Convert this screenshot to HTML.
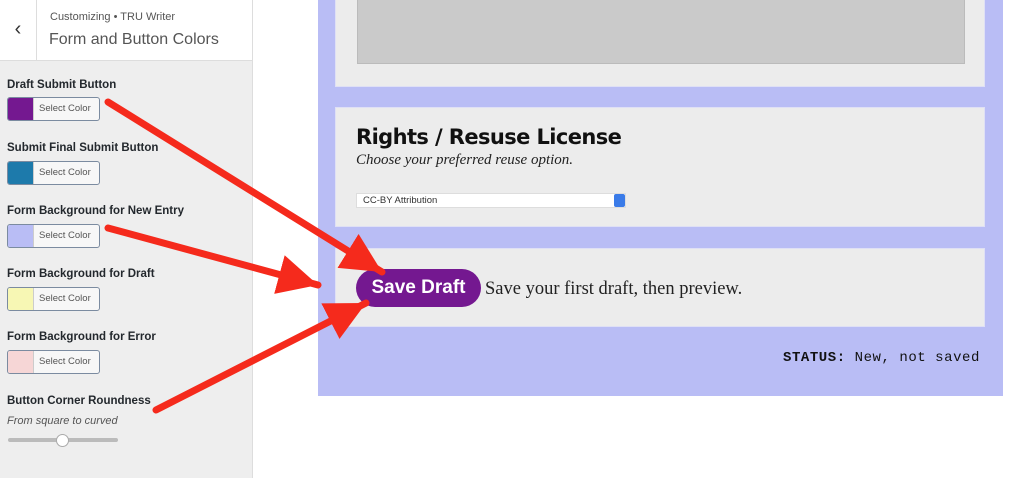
<!DOCTYPE html>
<html><head><meta charset="utf-8"><style>
*{margin:0;padding:0;box-sizing:border-box}
body{width:1028px;height:478px;position:relative;overflow:hidden;background:#fff;font-family:"Liberation Sans",sans-serif}
.side{position:absolute;left:0;top:0;width:253px;height:478px;background:#eeeeee;border-right:1px solid #ddd}
.hdr{position:absolute;left:0;top:0;width:252px;height:61px;background:#fff;border-bottom:1px solid #ddd}
.back{position:absolute;left:0;top:0;width:37px;height:61px;border-right:1px solid #ddd;font-size:20px;color:#333;text-align:center;line-height:58px}
.h1{position:absolute;left:50px;top:11px;font-size:11px;color:#555}
.h2{position:absolute;left:49px;top:31px;font-size:16px;color:#555;font-weight:300}
.lbl{position:absolute;left:7px;font-size:11.5px;font-weight:bold;color:#23282d}
.btn{position:absolute;left:7px;width:93px;height:24px;border:1px solid #7b8ba0;border-radius:3px;background:#f7f7f7;font-size:9.5px;color:#555;line-height:22px;overflow:hidden}
.btn i{display:inline-block;width:26px;height:22px;vertical-align:top;border-right:1px solid #ccc}
.btn span{margin-left:5px}
.blue{position:absolute;left:318px;top:0;width:685px;height:396px;background:#b9bdf5}
.box{position:absolute;left:335px;width:650px;background:#ececec;border:1px solid #dfe0f5}
</style></head><body>
<div class="side">
 <div class="hdr"><div class="back">&#8249;</div><div class="h1">Customizing • TRU Writer</div><div class="h2">Form and Button Colors</div></div>
 <div class="lbl" style="top:79px">Draft Submit Button</div>
 <div class="btn" style="top:97px"><i style="background:#741890"></i><span>Select Color</span></div>
 <div class="lbl" style="top:142px">Submit Final Submit Button</div>
 <div class="btn" style="top:161px"><i style="background:#1d7aab"></i><span>Select Color</span></div>
 <div class="lbl" style="top:205px">Form Background for New Entry</div>
 <div class="btn" style="top:224px"><i style="background:#b9bdf5"></i><span>Select Color</span></div>
 <div class="lbl" style="top:268px">Form Background for Draft</div>
 <div class="btn" style="top:287px"><i style="background:#f7f7b4"></i><span>Select Color</span></div>
 <div class="lbl" style="top:331px">Form Background for Error</div>
 <div class="btn" style="top:350px"><i style="background:#f6d6d6"></i><span>Select Color</span></div>
 <div class="lbl" style="top:395px">Button Corner Roundness</div>
 <div style="position:absolute;left:7px;top:415px;font-size:11px;font-style:italic;color:#555">From square to curved</div>
 <div style="position:absolute;left:8px;top:438px;width:110px;height:4px;background:#bbb;border-radius:2px"></div>
 <div style="position:absolute;left:56px;top:434px;width:13px;height:13px;background:#fff;border:1px solid #aaa;border-radius:50%"></div>
</div>
<div class="blue"></div>
<div class="box" style="top:-2px;height:89px"><div style="position:absolute;left:21px;top:0;width:608px;height:65px;background:#cacaca;border:1px solid #bbb;border-top:none"></div></div>
<div class="box" style="top:107px;height:120px">
 <div style="position:absolute;left:20px;top:17px;font-size:21px;font-weight:bold;color:#111;font-family:'DejaVu Sans',sans-serif;letter-spacing:-0.6px">Rights / Resuse License</div>
 <div style="position:absolute;left:20px;top:44px;font-size:15px;font-style:italic;color:#222;font-family:'Liberation Serif',serif">Choose your preferred reuse option.</div>
 <div style="position:absolute;left:20px;top:85px;width:270px;height:15px;background:#fff;border:1px solid #ddd;font-size:9.5px;color:#333;line-height:13px;padding-left:6px">CC-BY Attribution<span style="position:absolute;right:0;top:0;width:11px;height:13px;background:#3a7be8;border-radius:2px"></span></div>
</div>
<div class="box" style="top:248px;height:79px">
 <div style="position:absolute;left:20px;top:20px;width:125px;height:38px;background:#741890;border-radius:19px;color:#fff;font-weight:bold;font-size:19px;text-align:center;line-height:38px">Save Draft</div>
 <div style="position:absolute;left:149px;top:30px;font-size:18.5px;color:#222;font-family:'Liberation Serif',serif">Save your first draft, then preview.</div>
</div>
<div style="position:absolute;left:783px;top:350px;font-family:'Liberation Mono',monospace;font-size:14px;letter-spacing:0.55px;color:#111"><b>STATUS:</b> New, not saved</div>
<svg width="1028" height="478" style="position:absolute;left:0;top:0">
<defs><marker id="a" markerUnits="userSpaceOnUse" markerWidth="44" markerHeight="44" refX="40" refY="20" orient="auto"><path d="M0,0 L40,20 L0,40 Z" fill="#f52a1c"/></marker></defs>
<g stroke="#f52a1c" stroke-width="7" stroke-linecap="round" marker-end="url(#a)">
<line x1="108" y1="102" x2="382" y2="272"/>
<line x1="108" y1="228" x2="318" y2="285"/>
<line x1="156" y1="410" x2="366" y2="303"/>
</g></svg>
</body></html>
